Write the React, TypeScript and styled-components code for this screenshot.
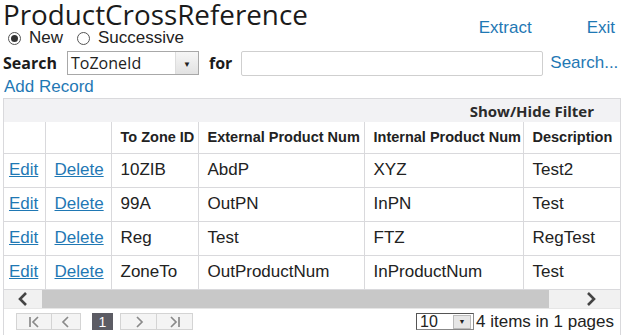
import React from 'react';
import styled, { createGlobalStyle } from 'styled-components';

const GlobalStyle = createGlobalStyle`
  body {
    margin: 0;
    background: #ffffff;
    font-family: "Liberation Sans", Arial, sans-serif;
    color: #222;
  }
`;

const LINK = '#1f78b4';
const LINE = '#d9d9dc';

const Page = styled.div`
  width: 623px;
  height: 335px;
  padding: 0 3px 0 3px;
  box-sizing: border-box;
  overflow: hidden;
`;

const Top = styled.div`
  display: flex;
  justify-content: space-between;
  height: 48px;
`;

const TitleBlock = styled.div`
  display: flex;
  flex-direction: column;
`;

const Title = styled.h1`
  margin: 0;
  height: 28px;
  font-family: "Open Sans", sans-serif;
  font-weight: 400;
  font-size: 27.8px;
  line-height: 28px;
  color: #1b1b1b;
  white-space: nowrap;
`;

const RadioRow = styled.div`
  display: flex;
  gap: 14px;
  padding-left: 5px;
  margin-top: 1px;
  font-size: 17px;
  line-height: 18px;
  height: 18px;
`;

const RadioItem = styled.label`
  display: flex;
  align-items: center;
  gap: 8px;
`;

const RadioDot = styled.span<{ $on?: boolean }>`
  width: 13px;
  height: 13px;
  box-sizing: border-box;
  border-radius: 50%;
  border: 1px solid #555;
  display: inline-flex;
  align-items: center;
  justify-content: center;
  &::after {
    content: '';
    width: 7px;
    height: 7px;
    border-radius: 50%;
    background: ${p => (p.$on ? '#333' : 'transparent')};
  }
`;

const TopLinks = styled.div`
  display: flex;
  gap: 55px;
  padding-top: 19px;
  padding-right: 5px;
`;

const Link = styled.a<{ $under?: boolean }>`
  color: ${LINK};
  font-size: 17px;
  line-height: 18px;
  text-decoration: ${p => (p.$under ? 'underline' : 'none')};
  cursor: pointer;
`;

const SearchRow = styled.div`
  display: flex;
  align-items: center;
  height: 28px;
  margin-top: 1px;
`;

const BoldLabel = styled.span`
  font-family: "Open Sans", sans-serif;
  font-weight: 700;
  font-size: 16px;
  color: #1b1b1b;
`;

const Select = styled.div`
  margin-left: 10px;
  width: 132px;
  height: 24px;
  border: 1px solid #a8a8a8;
  box-sizing: border-box;
  display: flex;
  align-items: center;
  font-family: "Open Sans", sans-serif;
  font-size: 16px;
  color: #222;
`;

const SelectText = styled.span`
  flex: 1;
  padding-left: 3px;
`;

const SelectArrow = styled.span`
  width: 22px;
  height: 22px;
  display: flex;
  align-items: center;
  justify-content: center;
  background: linear-gradient(#f6f6f6, #e2e2e2);
  border-left: 1px solid #ddd;
  font-size: 8px;
  color: #222;
`;

const ForLabel = styled(BoldLabel)`
  margin-left: 10px;
`;

const TextInput = styled.div`
  margin-left: 9px;
  width: 302px;
  height: 25px;
  border: 1px solid #cfcfcf;
  border-radius: 2px;
  box-sizing: border-box;
`;

const SearchLink = styled(Link)`
  margin-left: 7px;
`;

const AddRow = styled.div`
  height: 20px;
  display: flex;
  align-items: center;
  padding-left: 1px;
`;

const Grid = styled.div`
  margin-top: 1px;
  width: 618px;
  border: 1px solid ${LINE};
  box-sizing: border-box;
`;

const FilterBar = styled.div`
  height: 23px;
  background: #f2f2f4;
  display: flex;
  align-items: center;
  justify-content: flex-end;
  padding-right: 26px;
  font-family: "Open Sans", sans-serif;
  font-weight: 700;
  font-size: 15px;
  color: #2b2b2b;
`;

const Viewport = styled.div`
  overflow: hidden;
  width: 616px;
`;

const Table = styled.table`
  border-collapse: collapse;
  table-layout: fixed;
  width: 660px;
`;

const Th = styled.th<{ $w: number }>`
  width: ${p => p.$w}px;
  height: 31px;
  box-sizing: border-box;
  padding: 0 9px;
  text-align: left;
  font-size: 14.5px;
  font-weight: 700;
  color: #222;
  border-right: 1px solid ${LINE};
  border-bottom: 1px solid ${LINE};
  white-space: nowrap;
  overflow: hidden;
`;

const Td = styled.td`
  height: 34px;
  box-sizing: border-box;
  padding: 0 9px;
  font-size: 17px;
  color: #222;
  border-right: 1px solid ${LINE};
  border-bottom: 1px solid ${LINE};
  white-space: nowrap;
  overflow: hidden;
`;

const ActionTd = styled(Td)<{ $pl: number }>`
  padding: 0 0 0 ${p => p.$pl}px;
`;

const ScrollBar = styled.div`
  height: 18px;
  display: flex;
  align-items: stretch;
  background: #f1f1f1;
`;

const ScrollBtn = styled.div`
  width: 38px;
  display: flex;
  align-items: center;
  justify-content: center;
  background: #f1f1f1;
`;

const ScrollThumb = styled.div`
  flex: 0 0 507px;
  background: #c8c8c8;
`;

const ScrollRest = styled.div`
  flex: 1;
  display: flex;
  align-items: center;
  justify-content: flex-end;
  padding-right: 24px;
`;

const Pager = styled.div`
  height: 26px;
  display: flex;
  align-items: center;
  padding-left: 13px;
  border-top: 1px solid #e6e6e6;
`;

const PagerGroup = styled.div`
  display: flex;
`;

const PagerBtn = styled.div<{ $w: number }>`
  width: ${p => p.$w}px;
  height: 17px;
  box-sizing: border-box;
  border: 1px solid #d4d4d4;
  margin-left: -1px;
  background: #f4f4f4;
  display: flex;
  align-items: center;
  justify-content: center;
`;

const PageNum = styled.div`
  margin: 0 8px 0 11px;
  width: 21px;
  height: 17px;
  background: #5c5c64;
  color: #fff;
  font-size: 14px;
  display: flex;
  align-items: center;
  justify-content: center;
`;

const PagerRight = styled.div`
  margin-left: auto;
  display: flex;
  align-items: center;
  padding-right: 6px;
  font-size: 17px;
  color: #222;
`;

const SizeSelect = styled.div`
  width: 58px;
  height: 17px;
  box-sizing: border-box;
  border: 1px solid #888;
  border-top-color: #555;
  border-left-color: #555;
  display: flex;
  align-items: center;
  font-size: 16px;
  margin-right: 2px;
`;

const SizeText = styled.span`
  flex: 1;
  padding-left: 3px;
  line-height: 14px;
`;

const SizeArrow = styled.span`
  width: 16px;
  height: 12px;
  margin-right: 2px;
  display: flex;
  align-items: center;
  justify-content: center;
  background: #e6e6e6;
  border: 1px solid #bbb;
  font-size: 7px;
`;

const Chevron = ({ dir }: { dir: 'l' | 'r' }) => (
  <svg width="10" height="14" viewBox="0 0 10 14">
    <path
      d={dir === 'l' ? 'M8 1 L2 7 L8 13' : 'M2 1 L8 7 L2 13'}
      stroke="#444"
      strokeWidth="2.6"
      fill="none"
    />
  </svg>
);

const PagerIcon = ({ kind }: { kind: 'first' | 'prev' | 'next' | 'last' }) => {
  const c = '#8a8a8a';
  return (
    <svg width="14" height="12" viewBox="0 0 14 12">
      {kind === 'first' && <path d="M3 1 V11 M11 1 L6 6 L11 11" stroke={c} strokeWidth="1.7" fill="none" />}
      {kind === 'prev' && <path d="M9 1 L4 6 L9 11" stroke={c} strokeWidth="1.7" fill="none" />}
      {kind === 'next' && <path d="M5 1 L10 6 L5 11" stroke={c} strokeWidth="1.7" fill="none" />}
      {kind === 'last' && <path d="M3 1 L8 6 L3 11 M11 1 V11" stroke={c} strokeWidth="1.7" fill="none" />}
    </svg>
  );
};

const columns = [
  { title: '', w: 41 },
  { title: '', w: 66 },
  { title: 'To Zone ID', w: 87 },
  { title: 'External Product Num', w: 166 },
  { title: 'Internal Product Num', w: 159 },
  { title: 'Description', w: 141 },
];

const rows = [
  ['10ZIB', 'AbdP', 'XYZ', 'Test2'],
  ['99A', 'OutPN', 'InPN', 'Test'],
  ['Reg', 'Test', 'FTZ', 'RegTest'],
  ['ZoneTo', 'OutProductNum', 'InProductNum', 'Test'],
];

export default function App() {
  return (
    <Page>
      <GlobalStyle />
      <Top>
        <TitleBlock>
          <Title>ProductCrossReference</Title>
          <RadioRow>
            <RadioItem>
              <RadioDot $on />
              New
            </RadioItem>
            <RadioItem>
              <RadioDot />
              Successive
            </RadioItem>
          </RadioRow>
        </TitleBlock>
        <TopLinks>
          <Link>Extract</Link>
          <Link>Exit</Link>
        </TopLinks>
      </Top>
      <SearchRow>
        <BoldLabel>Search</BoldLabel>
        <Select>
          <SelectText>ToZoneId</SelectText>
          <SelectArrow>▼</SelectArrow>
        </Select>
        <ForLabel>for</ForLabel>
        <TextInput />
        <SearchLink>Search...</SearchLink>
      </SearchRow>
      <AddRow>
        <Link>Add Record</Link>
      </AddRow>
      <Grid>
        <FilterBar>Show/Hide Filter</FilterBar>
        <Viewport>
          <Table>
            <thead>
              <tr>
                {columns.map((c, i) => (
                  <Th key={i} $w={c.w}>{c.title}</Th>
                ))}
              </tr>
            </thead>
            <tbody>
              {rows.map((r, i) => (
                <tr key={i}>
                  <ActionTd $pl={5}><Link $under>Edit</Link></ActionTd>
                  <ActionTd $pl={9}><Link $under>Delete</Link></ActionTd>
                  {r.map((v, j) => (
                    <Td key={j}>{v}</Td>
                  ))}
                </tr>
              ))}
            </tbody>
          </Table>
        </Viewport>
        <ScrollBar>
          <ScrollBtn><Chevron dir="l" /></ScrollBtn>
          <ScrollThumb />
          <ScrollRest><Chevron dir="r" /></ScrollRest>
        </ScrollBar>
        <Pager>
          <PagerGroup>
            <PagerBtn $w={36}><PagerIcon kind="first" /></PagerBtn>
            <PagerBtn $w={30}><PagerIcon kind="prev" /></PagerBtn>
          </PagerGroup>
          <PageNum>1</PageNum>
          <PagerGroup>
            <PagerBtn $w={37}><PagerIcon kind="next" /></PagerBtn>
            <PagerBtn $w={37}><PagerIcon kind="last" /></PagerBtn>
          </PagerGroup>
          <PagerRight>
            <SizeSelect>
              <SizeText>10</SizeText>
              <SizeArrow>▼</SizeArrow>
            </SizeSelect>
            4 items in 1 pages
          </PagerRight>
        </Pager>
      </Grid>
    </Page>
  );
}
